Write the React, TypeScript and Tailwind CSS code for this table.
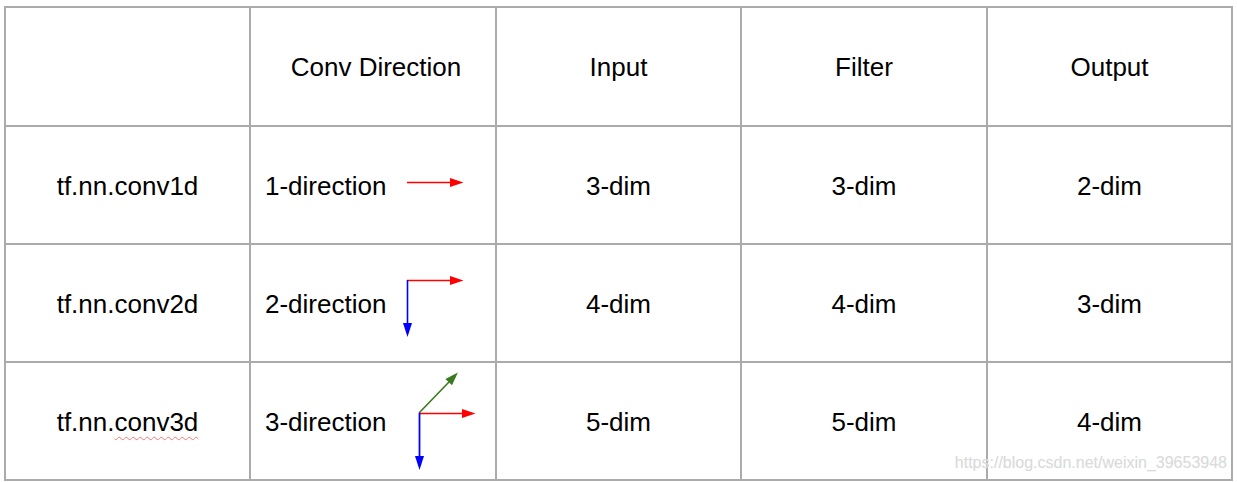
const cell = 'flex items-center justify-center border-r-2 border-b-2 border-[#ababab] pt-[2px]'

function Arrow1() {
  return (
    <svg className="h-full w-[100px]" viewBox="0 0 100 116">
      <line x1="12" y1="55.5" x2="56" y2="55.5" stroke="#ff0000" strokeWidth="1.5" />
      <polygon points="55,51 68.5,55.5 55,60" fill="#ff0000" />
    </svg>
  )
}

function Arrow2() {
  return (
    <svg className="h-full w-[100px]" viewBox="0 0 100 116">
      <line x1="12" y1="35.5" x2="56" y2="35.5" stroke="#ff0000" strokeWidth="1.5" />
      <polygon points="55,31 68.5,35.5 55,40" fill="#ff0000" />
      <line x1="12.5" y1="35" x2="12.5" y2="80" stroke="#0000ff" strokeWidth="1.6" />
      <polygon points="8,78 12.5,92 17,78" fill="#0000ff" />
    </svg>
  )
}

function Arrow3() {
  return (
    <svg className="h-full w-[100px]" viewBox="0 0 100 116">
      <line x1="24" y1="50" x2="54" y2="19" stroke="#3a7a1e" strokeWidth="1.6" />
      <polygon points="57,22.3 62.9,9.5 50.4,16" fill="#3a7a1e" />
      <line x1="24" y1="50.5" x2="68" y2="50.5" stroke="#ff0000" strokeWidth="1.5" />
      <polygon points="67,46 80.5,50.5 67,55" fill="#ff0000" />
      <line x1="24.5" y1="50" x2="24.5" y2="95" stroke="#0000ff" strokeWidth="1.8" />
      <polygon points="20,93 24.5,107 29,93" fill="#0000ff" />
    </svg>
  )
}

const rows = [
  { name: 'tf.nn.conv', suffix: '1d', dir: '1-direction', arrow: <Arrow1 />, input: '3-dim', filter: '3-dim', output: '2-dim' },
  { name: 'tf.nn.conv', suffix: '2d', dir: '2-direction', arrow: <Arrow2 />, input: '4-dim', filter: '4-dim', output: '3-dim' },
  { name: 'tf.nn.', suffix: 'conv3d', dir: '3-direction', arrow: <Arrow3 />, input: '5-dim', filter: '5-dim', output: '4-dim', wavy: true },
]

export default function App() {
  return (
    <div className="relative h-[482px] w-[1237px] overflow-hidden bg-white pl-[4px] pt-[6px] text-[26px] text-black [font-family:'Liberation_Sans',Arial,sans-serif]">
      <div className="grid w-fit grid-cols-[245px_246px_245px_246px_245px] grid-rows-[119px_118px_118px_118px] border-t-2 border-l-2 border-[#ababab]">
        <div className={cell} />
        <div className={cell}>
          <span className="pl-[6px]">Conv Direction</span>
        </div>
        <div className={cell}>Input</div>
        <div className={cell}>Filter</div>
        <div className={cell}>Output</div>

        {rows.map((r) => (
          <div key={r.dir} className="contents">
            <div className={cell}>
              <span>
                {r.wavy ? (
                  <>
                    {r.name}
                    <span className="underline decoration-[#f07878] decoration-wavy decoration-1 underline-offset-[5px]">{r.suffix}</span>
                  </>
                ) : (
                  r.name + r.suffix
                )}
              </span>
            </div>
            <div className="flex items-center border-r-2 border-b-2 border-[#ababab] pl-[14px]">
              <span className="w-[130px] shrink-0 pt-[2px]">{r.dir}</span>
              {r.arrow}
            </div>
            <div className={cell}>{r.input}</div>
            <div className={cell}>{r.filter}</div>
            <div className={cell}>{r.output}</div>
          </div>
        ))}
      </div>
      <div className="absolute top-[455px] right-[10px] text-[16px] leading-none text-[#dadada] [text-shadow:0_0_1px_#f4f4f4]">
        https://blog.csdn.net/weixin_39653948
      </div>
    </div>
  )
}
